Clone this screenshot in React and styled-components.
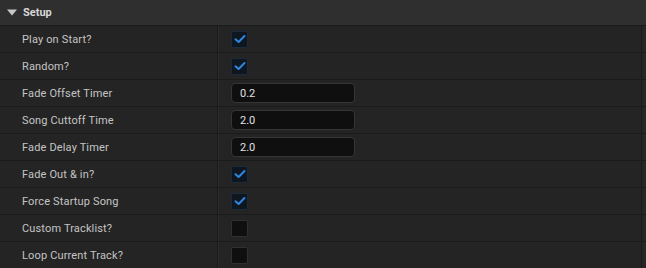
import React from "react";
import styled, { createGlobalStyle } from "styled-components";

const Global = createGlobalStyle`
  html, body { margin: 0; padding: 0; background: #242424; }
  body { font-family: "Roboto", "Liberation Sans", sans-serif; }
`;

const Panel = styled.div`
  width: 646px;
  height: 268px;
  background: #242424;
  overflow: hidden;
  display: flex;
  flex-direction: column;
`;

const Header = styled.div`
  height: 25px;
  background: #2f2f2f;
  border-bottom: 1px solid #1a1a1a;
  display: flex;
  align-items: center;
  gap: 6px;
  padding-left: 7px;
  color: #d8d8d8;
  font-size: 11px;
  font-weight: 700;
  flex-shrink: 0;
`;

const Row = styled.div`
  height: 26px;
  border-bottom: 1px solid #1b1b1b;
  display: grid;
  grid-template-columns: 217px 1px 1fr 1px 4px;
  flex-shrink: 0;
`;

const Label = styled.div`
  display: flex;
  align-items: center;
  padding-left: 22px;
  color: #c4c4c4;
  font-size: 11px;
  letter-spacing: 0.15px;
`;

const Divider = styled.div`
  background: #1a1a1a;
  box-shadow: 1px 0 0 #2c2c2c;
`;

const Value = styled.div`
  display: flex;
  align-items: center;
  padding-left: 13px;
`;

const Gutter = styled.div`
  background: #262626;
`;

const Box = styled.div`
  width: 15px;
  height: 15px;
  border-radius: 2px;
  border: 1px solid ${p => (p.$checked ? "#1c2a3a" : "#303030")};
  background: ${p => (p.$checked ? "#0e1620" : "#0f0f0f")};
  display: flex;
  align-items: center;
  justify-content: center;
`;

const Input = styled.div`
  width: 114px;
  height: 18px;
  background: #0f0f0f;
  border: 1px solid #353535;
  border-radius: 4px;
  display: flex;
  align-items: center;
  padding-left: 8px;
  color: #e2e2e2;
  font-size: 11px;
`;

const Check = () => (
  <svg width="12" height="10" viewBox="0 0 12 10">
    <path d="M1.5 5.2 L4.6 8 L10.5 2" fill="none" stroke="#2f86e0" strokeWidth="2" strokeLinecap="round" strokeLinejoin="round" />
  </svg>
);

const rows = [
  { label: "Play on Start?", type: "check", checked: true },
  { label: "Random?", type: "check", checked: true },
  { label: "Fade Offset Timer", type: "num", value: "0.2" },
  { label: "Song Cuttoff Time", type: "num", value: "2.0" },
  { label: "Fade Delay Timer", type: "num", value: "2.0" },
  { label: "Fade Out & in?", type: "check", checked: true },
  { label: "Force Startup Song", type: "check", checked: true },
  { label: "Custom Tracklist?", type: "check", checked: false },
  { label: "Loop Current Track?", type: "check", checked: false },
];

export default function App() {
  return (
    <Panel>
      <Global />
      <Header>
        <svg width="10" height="7" viewBox="0 0 10 7">
          <path d="M0 0.5 L10 0.5 L5 6.5 Z" fill="#c8c8c8" />
        </svg>
        Setup
      </Header>
      {rows.map(r => (
        <Row key={r.label}>
          <Label>{r.label}</Label>
          <Divider />
          <Value>
            {r.type === "check" ? (
              <Box $checked={r.checked}>{r.checked && <Check />}</Box>
            ) : (
              <Input>{r.value}</Input>
            )}
          </Value>
          <Divider />
          <Gutter />
        </Row>
      ))}
    </Panel>
  );
}
